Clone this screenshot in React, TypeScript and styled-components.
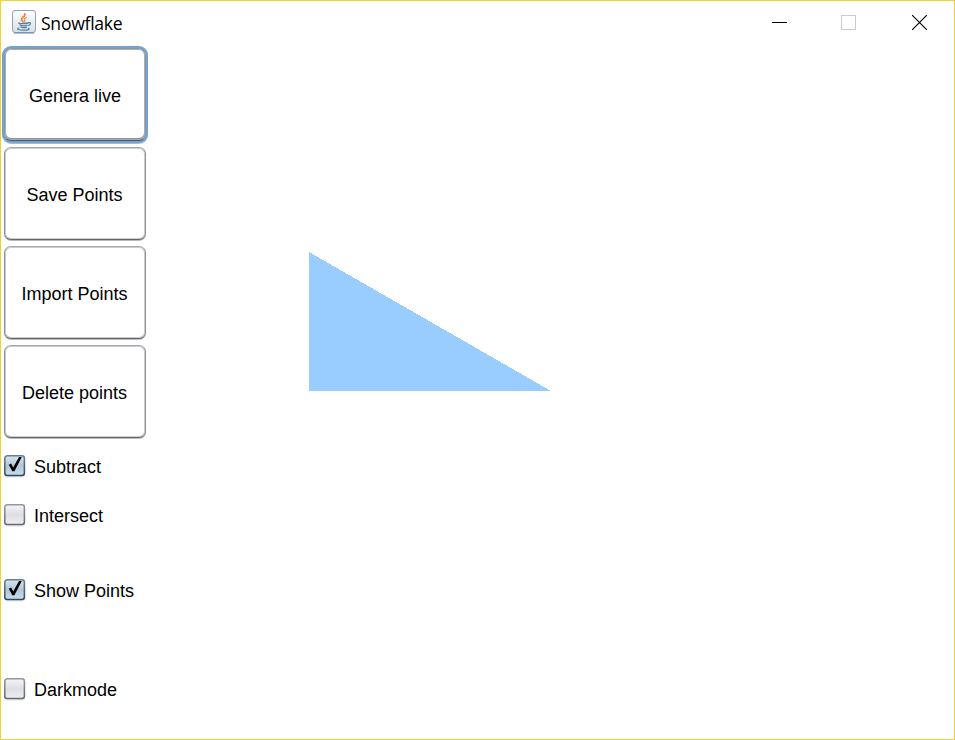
import React, { useState } from "react";
import styled, { createGlobalStyle, css } from "styled-components";

const GlobalStyle = createGlobalStyle`
  * { box-sizing: border-box; }
  body { margin: 0; background: #fff; overflow: hidden; }
`;

const Window = styled.div`
  display: flex;
  flex-direction: column;
  width: 955px;
  height: 740px;
  border: 1px solid #f5cf32;
  background: #fff;
  color: #000;
`;

const TitleBar = styled.header`
  display: flex;
  align-items: center;
  flex: 0 0 44px;
  padding-left: 10px;
`;

const AppIcon = styled.svg`
  display: block;
  width: 26px;
  height: 26px;
  margin-bottom: 2px;
`;

const Title = styled.h1`
  flex: 1;
  margin: 0 0 0 4px;
  font: 400 17.6px/24px "Open Sans", sans-serif;
  letter-spacing: -0.28px;
`;

const WindowControl = styled.button<{ $nudge?: boolean }>`
  display: flex;
  align-items: center;
  justify-content: center;
  width: 70px;
  height: 44px;
  padding: ${({ $nudge }) => ($nudge ? "0 2px 2px 0" : "0 0 1px 0")};
  border: 0;
  background: none;

  svg { display: block; }
`;

const Content = styled.div`
  display: flex;
  flex: 1;
`;

const Sidebar = styled.aside`
  display: grid;
  grid-template-rows: repeat(4, 99px) 49px 50px 99px 99px;
  width: 148px;
  font: 18px/20px "Liberation Sans", Arial, sans-serif;
`;

const ActionButton = styled.button<{ $active?: boolean }>`
  width: 142px;
  height: 93px;
  margin: 3px 0 0 3px;
  padding: 2px 1px 0 0;
  border: 1px solid;
  border-color: #a4a7ab #8c8f94 #65676b #8c8f94;
  border-radius: 7px;
  background: #fff;
  box-shadow:
    inset 0 0 0 1px #cccdd0,
    0 1px 0 #b9babd;
  color: #000;
  font: inherit;
  outline: none;

  ${({ $active }) =>
    $active &&
    css`
      padding: 2px 0 0;
      border-color: #8598ad #8598ad #50555e #8598ad;
      box-shadow:
        inset 0 0 0 1px #a9adb2,
        inset 0 -1px 0 1px #8f9298,
        0 0 0 2px #73a4d1,
        0 1px 0 2px #9bbfe0;
    `}
`;

const CheckRow = styled.label`
  display: flex;
  align-items: center;
  padding-left: 3px;
`;

const CheckInput = styled.input`
  position: absolute;
  opacity: 0;
  pointer-events: none;
`;

const CheckIcon = styled.svg`
  display: block;
  width: 22px;
  height: 24px;
  margin-right: 8px;
`;

const CheckLabel = styled.span`
  padding-top: 2px;
`;

const Canvas = styled.main`
  flex: 1;
`;

const Drawing = styled.svg`
  display: block;
`;

const JavaCup = () => (
  <AppIcon viewBox="0 0 26 26">
    <defs>
      <linearGradient id="tile" x1="0" y1="0" x2="0" y2="1">
        <stop offset="0" stopColor="#ffffff" />
        <stop offset="1" stopColor="#d9dee4" />
      </linearGradient>
    </defs>
    <rect x="1.5" y="1.5" width="23" height="22" rx="2.5" fill="url(#tile)" stroke="#8ea3b8" />
    <path d="M3 24 H23" stroke="#6c879f" />
    <g fill="none" strokeLinecap="round">
      <path d="M13.8 4.8 C15 7.5 10 8.2 10.5 10.5 C10.8 11.8 12 12 12 13" stroke="#ef8336" strokeWidth="1.7" />
      <path d="M15.6 8.5 C13 9.3 12.9 10.2 13.8 11.2 C14.2 12 13.8 12.5 13.4 13" stroke="#ee8c48" strokeWidth="1.2" />
      <path d="M8 13.7 C6.5 14.8 13 15.1 17 14" stroke="#5280a6" strokeWidth="1.3" />
      <path d="M17.7 13.6 C20.4 13.2 19.8 15.9 17.4 16.5" stroke="#5280a6" strokeWidth="1.2" />
      <path d="M9 16 C10.5 17 14 16.9 16 16.2 M9.8 18 C11.5 18.8 14 18.6 15.5 18.1" stroke="#5280a6" strokeWidth="1.2" />
      <path d="M7.8 19 C4.4 20.1 8.5 21.2 12.5 21.2 C16.5 21.2 19.5 20.3 17.5 19.4" stroke="#5280a6" strokeWidth="1.2" />
    </g>
  </AppIcon>
);

const CheckMark = ({ checked }: { checked: boolean }) => {
  const id = checked ? "box-on" : "box-off";
  return (
    <CheckIcon viewBox="0 0 22 24">
      <defs>
        <linearGradient id={id} x1="0" y1="0" x2="0" y2="1">
          <stop offset="0" stopColor={checked ? "#dae5ef" : "#f5f5f8"} />
          <stop offset="0.5" stopColor={checked ? "#b4c6d6" : "#dddee3"} />
          <stop offset="1" stopColor={checked ? "#c8dceb" : "#edeef2"} />
        </linearGradient>
        <linearGradient id={id + "-edge"} x1="0" y1="0" x2="0" y2="1">
          <stop offset="0" stopColor={checked ? "#647f98" : "#95969c"} />
          <stop offset="1" stopColor={checked ? "#2e4a63" : "#686970"} />
        </linearGradient>
      </defs>
      <rect x="0.3" y="2" width="21" height="21.5" rx="3.5" fill="#e3e5e9" />
      <rect x="0.8" y="1.8" width="19.6" height="19.6" rx="2.5" fill={`url(#${id})`} stroke={`url(#${id}-edge)`} strokeWidth="1.5" />
      {checked && <path d="M4.8 10.8 L7.1 9.6 L9.2 13.6 L15 3 H17.8 L10.4 17.2 H8.3 Z" fill="#000" />}
    </CheckIcon>
  );
};

const CheckBox = ({ label, initial = false }: { label: string; initial?: boolean }) => {
  const [checked, setChecked] = useState(initial);
  return (
    <CheckRow>
      <CheckInput type="checkbox" checked={checked} onChange={() => setChecked(!checked)} />
      <CheckMark checked={checked} />
      <CheckLabel>{label}</CheckLabel>
    </CheckRow>
  );
};

export default function App() {
  return (
    <>
      <GlobalStyle />
      <Window>
        <TitleBar>
          <JavaCup />
          <Title>Snowflake</Title>
          <WindowControl aria-label="Minimize">
            <svg width="15" height="15" shapeRendering="crispEdges">
              <path d="M0 7.5H15" stroke="#000" />
            </svg>
          </WindowControl>
          <WindowControl aria-label="Maximize" disabled $nudge>
            <svg width="15" height="15" shapeRendering="crispEdges">
              <rect x="0.5" y="0.5" width="14" height="14" fill="none" stroke="#ccc" />
            </svg>
          </WindowControl>
          <WindowControl aria-label="Close">
            <svg width="15" height="15">
              <path d="M0 0L15 15M15 0L0 15" stroke="#000" strokeWidth="1.1" />
            </svg>
          </WindowControl>
        </TitleBar>
        <Content>
          <Sidebar>
            <ActionButton $active>Genera live</ActionButton>
            <ActionButton>Save Points</ActionButton>
            <ActionButton>Import Points</ActionButton>
            <ActionButton>Delete points</ActionButton>
            <CheckBox label="Subtract" initial />
            <CheckBox label="Intersect" />
            <CheckBox label="Show Points" initial />
            <CheckBox label="Darkmode" />
          </Sidebar>
          <Canvas>
            <Drawing width="805" height="694" shapeRendering="crispEdges">
              <polygon points="160,207 160,346 402,346" fill="#99ccff" />
            </Drawing>
          </Canvas>
        </Content>
      </Window>
    </>
  );
}
